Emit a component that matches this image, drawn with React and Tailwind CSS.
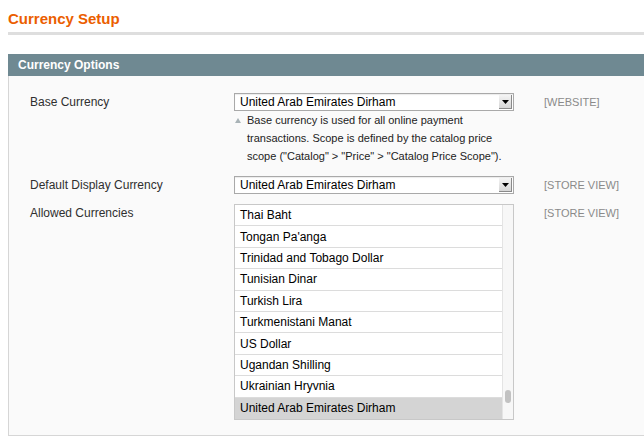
import React from "react";

const items = [
  "Thai Baht",
  "Tongan Pa'anga",
  "Trinidad and Tobago Dollar",
  "Tunisian Dinar",
  "Turkish Lira",
  "Turkmenistani Manat",
  "US Dollar",
  "Ugandan Shilling",
  "Ukrainian Hryvnia",
  "United Arab Emirates Dirham",
];

function Select({ value }) {
  return (
    <div className="flex h-[18px] w-[280px] items-stretch border border-[#a9a9a9] bg-white shadow-[inset_0_1px_1px_rgba(0,0,0,0.08)]">
      <div className="flex flex-1 items-center pl-[5px] text-[12px] leading-none text-black">{value}</div>
      <div className="m-[1px] flex w-[13px] items-center justify-center border-r border-b border-[#8a8a8a] bg-gradient-to-b from-[#f4f4f4] to-[#d6d6d6]">
        <svg width="7" height="4" viewBox="0 0 7 4">
          <path d="M0 0 L7 0 L3.5 4 Z" fill="#000" />
        </svg>
      </div>
    </div>
  );
}

export default function App() {
  return (
    <div className="h-[444px] w-[644px] overflow-hidden bg-white font-['Liberation_Sans',Arial,sans-serif] text-[#2f2f2f]">
      <div className="pl-[8px] pt-[9px]">
        <h1 className="text-[15px] font-bold leading-[20px] text-[#eb5e00]">Currency Setup</h1>
        <div className="mt-[3px] h-[3px] bg-[#dedede]" />
        <div className="mt-[19px]">
          <div className="flex h-[22px] items-center bg-[#6f8992] pl-[10px] text-[12px] font-bold text-white">
            Currency Options
          </div>
          <div className="h-[360px] border-l border-b border-[#d6d6d6] bg-[#fafafa] pl-[21px] pt-[17px]">
            {/* Base currency */}
            <div className="flex">
              <div className="w-[204px] pt-[2px] text-[12px] leading-[15px]">Base Currency</div>
              <div className="w-[280px]">
                <Select value="United Arab Emirates Dirham" />
                <div className="flex text-[11px] leading-[18px] text-[#222]">
                  <span className="flex h-[18px] w-[13px] items-center pl-[1px]">
                    <svg width="6" height="5" viewBox="0 0 6 5">
                      <path d="M3 0 L6 5 L0 5 Z" fill="#a9b3b7" />
                    </svg>
                  </span>
                  <span className="w-[260px]">
                    Base currency is used for all online payment transactions. Scope is defined by the catalog price scope ("Catalog" &gt; "Price" &gt; "Catalog Price Scope").
                  </span>
                </div>
              </div>
              <div className="pl-[30px] pt-[2px] text-[11px] leading-[14px] text-[#8a8a8a]">[WEBSITE]</div>
            </div>
            {/* Default display */}
            <div className="mt-[11px] flex">
              <div className="w-[204px] pt-[2px] text-[12px] leading-[15px]">Default Display Currency</div>
              <div className="w-[280px]">
                <Select value="United Arab Emirates Dirham" />
              </div>
              <div className="pl-[30px] pt-[2px] text-[11px] leading-[14px] text-[#8a8a8a]">[STORE VIEW]</div>
            </div>
            {/* Allowed */}
            <div className="mt-[10px] flex">
              <div className="w-[204px] pt-[2px] text-[12px] leading-[15px]">Allowed Currencies</div>
              <div className="flex h-[216px] w-[280px] border border-[#c8c8c8] bg-white">
                <div className="flex-1">
                  {items.map((it, i) => (
                    <div
                      key={it}
                      className={
                        i === items.length - 1
                          ? "flex h-[21.4px] items-center bg-[#d4d4d4] pl-[5px] text-[12px] text-black"
                          : "flex h-[21.4px] items-center border-b border-[#dcdcdc] pl-[5px] text-[12px] text-black"
                      }
                    >
                      {it}
                    </div>
                  ))}
                </div>
                <div className="relative w-[11px] border-l border-[#e4e4e4] bg-[#f7f7f7]">
                  <div className="absolute left-[2px] top-[185px] h-[13px] w-[6px] rounded-full bg-[#c2c2c2]" />
                </div>
              </div>
              <div className="pl-[30px] pt-[2px] text-[11px] leading-[14px] text-[#8a8a8a]">[STORE VIEW]</div>
            </div>
          </div>
        </div>
      </div>
    </div>
  );
}
